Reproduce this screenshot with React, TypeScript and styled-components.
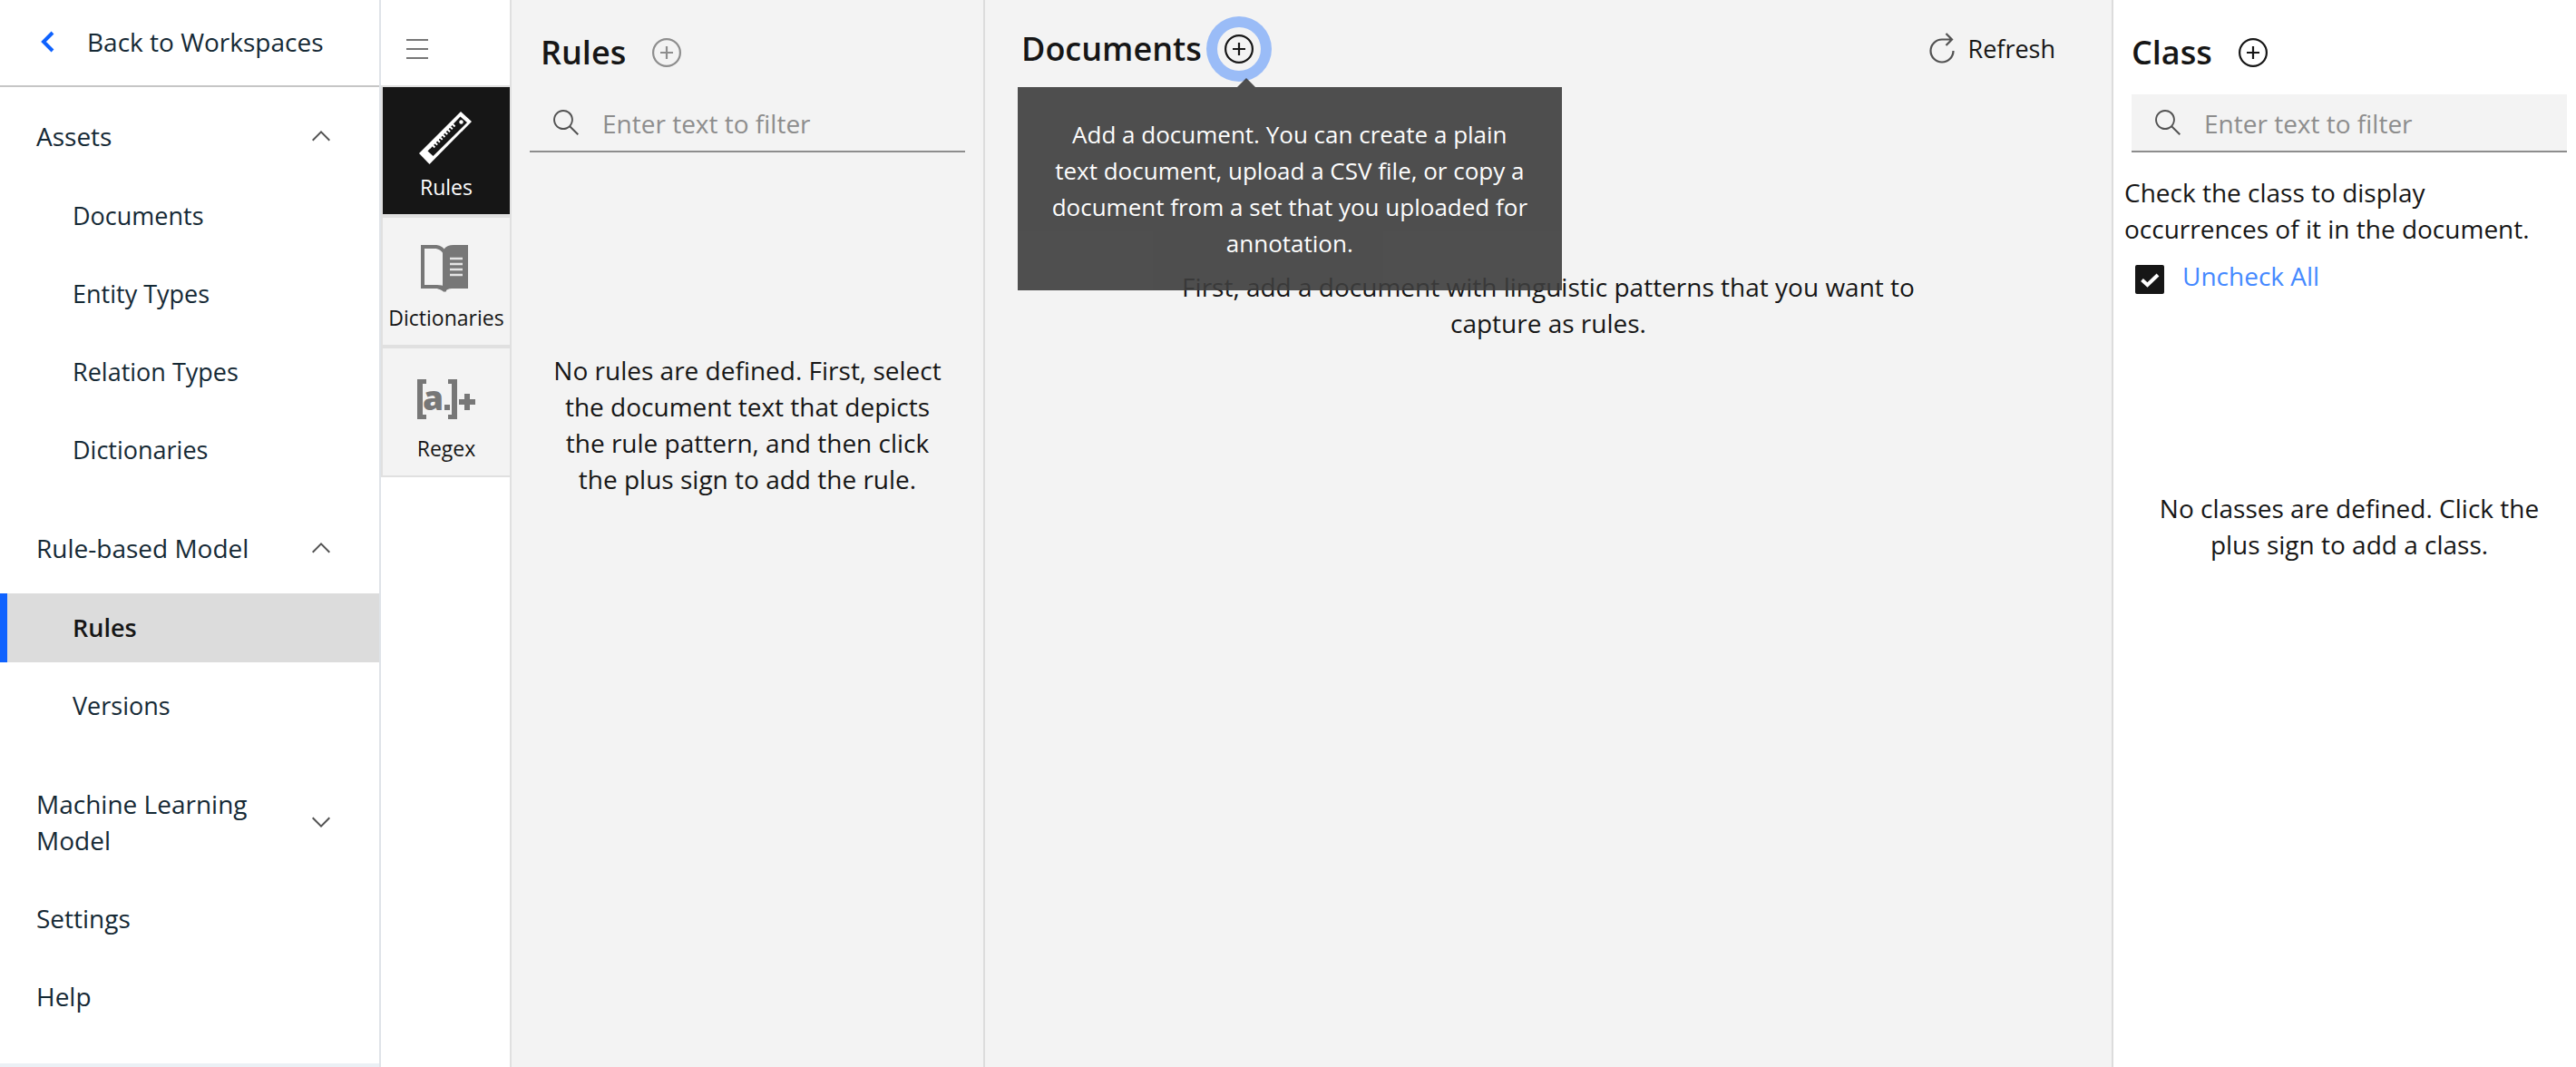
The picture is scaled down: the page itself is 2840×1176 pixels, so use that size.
import React from "react";
import styled, { createGlobalStyle, css } from "styled-components";

const Global = createGlobalStyle`
  *, *::before, *::after { box-sizing: border-box; }
  body {
    margin: 0;
    background: #fff;
    color: #161616;
    font-family: "Open Sans", "Noto Sans", sans-serif;
    font-size: 28px;
    line-height: 40px;
  }
  button, input { font: inherit; color: inherit; }
  h2, p, ul { margin: 0; padding: 0; }
  a { color: inherit; text-decoration: none; }
  svg { flex: none; }
`;

const Shell = styled.div`
  display: flex;
  align-items: stretch;
  min-height: 100vh;
`;

const Sidebar = styled.nav`
  flex: none;
  display: flex;
  flex-direction: column;
  width: 420px;
  border-right: 2px solid #dfe3e8;
  color: #152935;
`;

const BackLink = styled.a`
  display: flex;
  align-items: center;
  gap: 36px;
  height: 96px;
  padding: 0 44px 2px;
  border-bottom: 2px solid #c6c6c6;
  white-space: nowrap;
`;

const Groups = styled.div`
  flex: 1;
  display: flex;
  flex-direction: column;
  gap: 32px;
  padding-top: 16px;
  border-bottom: 4px solid #ebf0f5;
`;

const Group = styled.div`
  display: flex;
  flex-direction: column;
  gap: 12px;
`;

const GroupButton = styled.button`
  display: flex;
  align-items: center;
  justify-content: space-between;
  gap: 48px;
  width: 100%;
  min-height: 76px;
  padding: 18px 48px 18px 40px;
  border: 0;
  background: none;
  text-align: left;
  cursor: pointer;
`;

const Items = styled.ul`
  display: flex;
  flex-direction: column;
  gap: 10px;
  list-style: none;
`;

const NavLink = styled.a<{ $top?: boolean; $active?: boolean }>`
  display: block;
  padding: 18px 40px 18px ${(p) => (p.$top ? 40 : 80)}px;
  font-size: ${(p) => (p.$top ? 28 : 27)}px;
  ${(p) =>
    p.$active &&
    css`
      background: #dcdcdc;
      box-shadow: inset 8px 0 #0f62fe;
      color: #161616;
      font-weight: 600;
    `}
`;

const Rail = styled.div`
  flex: none;
  width: 144px;
  border-right: 2px solid #e0e0e0;
`;

const MenuButton = styled.button`
  display: flex;
  align-items: center;
  width: 100%;
  height: 94px;
  padding: 14px 28px 0;
  border: 0;
  background: none;
  cursor: pointer;
`;

const Tile = styled.button<{ $active?: boolean }>`
  display: flex;
  flex-direction: column;
  align-items: center;
  gap: 6px;
  width: 100%;
  height: 144px;
  padding: 24px 0 0;
  border: solid #e0e0e0;
  border-width: 2px 0 2px 2px;
  background: ${(p) => (p.$active ? "#161616" : "#f3f3f3")};
  color: ${(p) => (p.$active ? "#fff" : "#161616")};
  font-size: 23px;
  line-height: 32px;
  cursor: pointer;
`;

const RulesPanel = styled.section`
  flex: none;
  width: 522px;
  padding: 32px 20px;
  border-right: 2px solid #dcdcdc;
  background: #f3f3f3;
`;

const DocumentsPanel = styled.section`
  flex: 1;
  min-width: 0;
  padding: 28px 40px;
  border-right: 2px solid #dcdcdc;
  background: #f3f3f3;
`;

const ClassPanel = styled.section`
  flex: none;
  width: 510px;
  padding: 32px 10px 32px 20px;
`;

const PanelHead = styled.header<{ $indent?: number; $gap?: number }>`
  display: flex;
  align-items: center;
  gap: ${(p) => p.$gap ?? 29}px;
  height: 52px;
  padding-left: ${(p) => p.$indent ?? 0}px;
`;

const Title = styled.h2`
  font-size: 36px;
  font-weight: 600;
  line-height: 52px;
`;

const RoundButton = styled.button<{ $muted?: boolean; $focused?: boolean }>`
  display: flex;
  flex: none;
  padding: ${(p) => (p.$focused ? 8 : 0)}px;
  border: 0;
  border-radius: 50%;
  background: none;
  color: ${(p) => (p.$muted ? "#8d8d8d" : "#161616")};
  box-shadow: ${(p) => (p.$focused ? "0 0 0 12px #9abcf7" : "none")};
  cursor: pointer;
`;

const SearchBox = styled.label`
  display: flex;
  align-items: center;
  gap: 24px;
  height: 64px;
  margin-top: 20px;
  padding: 0 24px;
  border-bottom: 2px solid #8d8d8d;
  background: #f3f3f3;
  color: #525252;
`;

const SearchInput = styled.input`
  flex: 1;
  min-width: 0;
  padding: 2px 0 0;
  border: 0;
  outline: 0;
  background: none;
  &::placeholder { color: #8d8d8d; opacity: 1; }
`;

const Empty = styled.p<{ $top: number; $width: number }>`
  max-width: ${(p) => p.$width}px;
  margin: ${(p) => p.$top}px auto 0;
  text-align: center;
`;

const TooltipAnchor = styled.div`
  position: relative;
  display: flex;
`;

const Tooltip = styled.div`
  position: absolute;
  z-index: 1;
  top: 66px;
  left: -220px;
  width: 600px;
  padding: 32px 28px;
  background: #3d3d3d;
  color: #fff;
  opacity: 0.9;
  font-size: 26px;
  text-align: center;
  &::before {
    content: "";
    position: absolute;
    top: -10px;
    left: 242px;
    border: solid transparent;
    border-width: 0 10px 10px;
    border-bottom-color: #3d3d3d;
  }
`;

const RefreshButton = styled.button`
  display: flex;
  align-items: center;
  gap: 14px;
  margin-left: auto;
  padding: 0 22px 0 0;
  border: 0;
  background: none;
  font-size: 27px;
  cursor: pointer;
`;

const Hint = styled.p`
  margin: 24px 32px 0 -8px;
`;

const CheckRow = styled.div`
  display: flex;
  align-items: flex-start;
  gap: 20px;
  padding: 12px 4px 0;
`;

const CheckLabel = styled.label`
  color: #4589ff;
`;

const CheckHolder = styled.span`
  display: grid;
  margin-top: 8px;
  svg { grid-area: 1 / 1; pointer-events: none; }
`;

const CheckInput = styled.input`
  grid-area: 1 / 1;
  appearance: none;
  width: 32px;
  height: 32px;
  margin: 0;
  border: 2px solid #161616;
  border-radius: 2px;
  &:checked { background: #161616; }
`;

const Chevron = ({ down }: { down?: boolean }) => (
  <svg width="32" height="32" viewBox="0 0 16 16" fill="#525252" aria-hidden="true">
    <path d={down ? "M8 11 3 6l.7-.7L8 9.6l4.3-4.3.7.7z" : "M8 5l5 5-.7.7L8 6.4l-4.3 4.3L3 10z"} />
  </svg>
);

const AddIcon = () => (
  <svg width="32" height="32" viewBox="0 0 32 32" fill="none" stroke="currentColor" strokeWidth="2.2" aria-hidden="true">
    <circle cx="16" cy="16" r="14.9" />
    <path d="M16 9v14M9 16h14" />
  </svg>
);

const SearchIcon = () => (
  <svg width="32" height="32" viewBox="0 0 16 16" fill="currentColor" aria-hidden="true">
    <path d="M15 14.3 10.7 10c1.9-2.3 1.6-5.8-.7-7.7S4.2.7 2.3 3 .7 8.8 3 10.7c2 1.7 5 1.7 7 0l4.3 4.3.7-.7zM2 6.5C2 4 4 2 6.5 2S11 4 11 6.5 9 11 6.5 11 2 9 2 6.5z" />
  </svg>
);

const RulerIcon = () => (
  <svg width="64" height="64" viewBox="-2 -3 64 64" aria-hidden="true">
    <path d="M46 0 58 11 11.500 58 0 46Z" fill="#fff" />
    <path d="M45.500 5.500 53 12 15.500 49 9.500 43.500Z" fill="#161616" />
    <path d="M37 12 11 40" stroke="#fff" strokeWidth="3" />
    <path d="M39 14.500 14.500 40" stroke="#fff" strokeWidth="3.500" strokeDasharray="2 2" />
    <circle cx="46.500" cy="11.500" r="2.200" fill="#fff" />
  </svg>
);

const BookIcon = () => (
  <svg width="64" height="64" viewBox="-4 -6 64 64" aria-hidden="true">
    <path d="M2 2h15q6 1 9 6v40q-3-2-8-2H2z" fill="none" stroke="#777" strokeWidth="4" />
    <path d="M26 4q3-4 10-4h16v48H34q-5 0-8 4q-4-3-8-4l8-2z" fill="#777" />
    <path d="M32 15h14M32 21h14M32 27h14M32 33h14" stroke="#e4e4e4" strokeWidth="2.600" />
  </svg>
);

const RegexIcon = () => (
  <svg width="64" height="64" viewBox="0 -10 64 64" fill="#777" aria-hidden="true">
    <path d="M0 0h10v5H6v34h4v5H0zM34 0h10v44H34v-5h4V5h-4zM30 28h6v6h-6zM52 16h6v6h6v6h-6v6h-6v-6h-6v-6h6z" />
    <text x="6" y="34" fontSize="37" fontWeight="800" fontFamily="Open Sans">a</text>
  </svg>
);

const Search = ({ id }: { id: string }) => (
  <SearchBox htmlFor={id}>
    <SearchIcon />
    <SearchInput id={id} type="text" placeholder="Enter text to filter" aria-label="Enter text to filter" />
  </SearchBox>
);

export default function App() {
  return (
    <>
      <Global />
      <Shell>
        <Sidebar>
          <BackLink href="#">
            <svg width="16" height="24" viewBox="0 0 16 24" fill="none" stroke="#0f62fe" strokeWidth="4" aria-hidden="true">
              <path d="M14 2 4 12l10 10" />
            </svg>
            Back to Workspaces
          </BackLink>
          <Groups>
            <Group>
              <GroupButton>Assets<Chevron /></GroupButton>
              <Items>
                {["Documents", "Entity Types", "Relation Types", "Dictionaries"].map((t) => (
                  <li key={t}><NavLink href="#">{t}</NavLink></li>
                ))}
              </Items>
            </Group>
            <Group>
              <GroupButton>Rule-based Model<Chevron /></GroupButton>
              <Items>
                <li><NavLink href="#" $active>Rules</NavLink></li>
                <li><NavLink href="#">Versions</NavLink></li>
              </Items>
            </Group>
            <Items as="div">
              <GroupButton>Machine Learning Model<Chevron down /></GroupButton>
              <NavLink href="#" $top>Settings</NavLink>
              <NavLink href="#" $top>Help</NavLink>
            </Items>
          </Groups>
        </Sidebar>

        <Rail>
          <MenuButton aria-label="Menu">
            <svg width="24" height="24" viewBox="0 0 24 24" stroke="#777" strokeWidth="2.200" aria-hidden="true">
              <path d="M0 2h24M0 12h24M0 22h24" />
            </svg>
          </MenuButton>
          <Tile $active><RulerIcon />Rules</Tile>
          <Tile><BookIcon />Dictionaries</Tile>
          <Tile><RegexIcon />Regex</Tile>
        </Rail>

        <RulesPanel>
          <PanelHead $indent={12}>
            <Title>Rules</Title>
            <RoundButton $muted aria-label="Add rule"><AddIcon /></RoundButton>
          </PanelHead>
          <Search id="rules-filter" />
          <Empty $top={220} $width={436}>
            No rules are defined. First, select the document text that depicts the rule pattern, and then click the plus sign to add the rule.
          </Empty>
        </RulesPanel>

        <DocumentsPanel>
          <PanelHead $gap={17}>
            <Title>Documents</Title>
            <TooltipAnchor>
              <RoundButton $focused aria-label="Add document"><AddIcon /></RoundButton>
              <Tooltip role="tooltip">
                Add a document. You can create a plain<br />
                text document, upload a CSV file, or copy a<br />
                document from a set that you uploaded for<br />
                annotation.
              </Tooltip>
            </TooltipAnchor>
            <RefreshButton>
              <svg width="28" height="36" viewBox="0 0 28 36" fill="none" stroke="#525252" strokeWidth="2.200" aria-hidden="true">
                <path d="M26.500 20A12.500 12.500 0 1 1 14 7.500H25M18.500 1l6.500 6.500L18.500 14" />
              </svg>
              Refresh
            </RefreshButton>
          </PanelHead>
          <Empty $top={216} $width={820}>
            First, add a document with linguistic patterns that you want to capture as rules.
          </Empty>
        </DocumentsPanel>

        <ClassPanel>
          <PanelHead>
            <Title>Class</Title>
            <RoundButton aria-label="Add class"><AddIcon /></RoundButton>
          </PanelHead>
          <Search id="class-filter" />
          <Hint>Check the class to display occurrences of it in the document.</Hint>
          <CheckRow>
            <CheckHolder>
              <CheckInput id="check-all" type="checkbox" defaultChecked />
              <svg width="32" height="32" viewBox="0 0 32 32" fill="none" stroke="#fff" strokeWidth="4" aria-hidden="true">
                <path d="M7.500 16.500 13.500 22 25 11" />
              </svg>
            </CheckHolder>
            <CheckLabel htmlFor="check-all">Uncheck All</CheckLabel>
          </CheckRow>
          <Empty $top={216} $width={440}>
            No classes are defined. Click the plus sign to add a class.
          </Empty>
        </ClassPanel>
      </Shell>
    </>
  );
}
